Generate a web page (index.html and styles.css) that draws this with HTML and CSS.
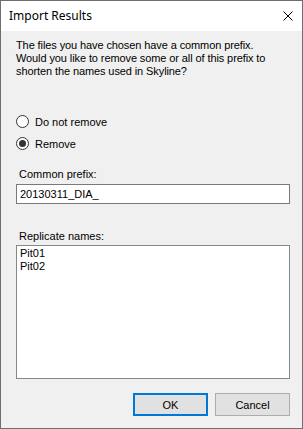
FILE: index.html
```html
<!DOCTYPE html>
<html lang="en">
<head>
<meta charset="UTF-8">
<title>Import Results</title>
<link rel="stylesheet" href="styles.css">
</head>
<body>
  <div class="window">
    <div class="titlebar">
      <div class="title">Import Results</div>
      <div class="close">
        <svg width="10" height="10" viewBox="0 0 10 10">
          <path d="M0.5 0.5 L9.5 9.5 M9.5 0.5 L0.5 9.5" stroke="#000" stroke-width="1" fill="none"/>
        </svg>
      </div>
    </div>

    <div class="content">
      <p class="message">The files you have chosen have a common prefix.<br>
        Would you like to remove some or all of this prefix to<br>
        shorten the names used in Skyline?</p>

      <div class="radios">
        <div class="radio-row">
          <span class="radio"></span>
          <span>Do not remove</span>
        </div>
        <div class="radio-row">
          <span class="radio checked"></span>
          <span>Remove</span>
        </div>
      </div>

      <div class="field-label prefix-label">Common prefix:</div>
      <div class="textbox">20130311_DIA_</div>

      <div class="field-label names-label">Replicate names:</div>
      <div class="listbox">
        <div>Pit01</div>
        <div>Pit02</div>
      </div>

      <div class="buttons">
        <button class="btn btn-default">OK</button>
        <button class="btn">Cancel</button>
      </div>
    </div>
  </div>
</body>
</html>
```

FILE: styles.css
```css
body {
  margin: 0;
  padding: 0;
  font-family: "Liberation Sans", Arial, sans-serif;
  font-size: 11px;
  color: #000;
}

.window {
  width: 303px;
  height: 429px;
  box-sizing: border-box;
  border: 1px solid #6f6f6f;
  background-color: #f0f0f0;
}

.titlebar {
  height: 30px;
  background-color: #fff;
  display: flex;
  align-items: center;
  justify-content: space-between;
  padding-left: 8px;
  padding-right: 9px;
}

.title {
  font-family: "Noto Sans", "Open Sans", sans-serif;
  font-size: 12px;
  padding-bottom: 1px;
}

.close {
  display: flex;
  width: 10px;
  height: 10px;
}

.content {
  padding: 8px 12px 0 15px;
}

.message {
  margin: 0;
  line-height: 13px;
  letter-spacing: -0.1px;
}

.radios {
  margin-top: 35px;
}

.radio-row {
  display: flex;
  align-items: center;
  height: 17px;
  margin-bottom: 5px;
}

.radio {
  width: 13px;
  height: 13px;
  box-sizing: border-box;
  border: 1px solid #333;
  border-radius: 50%;
  background-color: #fff;
  margin-right: 6px;
  display: flex;
  align-items: center;
  justify-content: center;
}

.radio.checked::after {
  content: "";
  width: 7px;
  height: 7px;
  border-radius: 50%;
  background-color: #333;
}

.field-label {
  padding-left: 3px;
  line-height: 13px;
}

.prefix-label {
  margin-top: 16px;
}

.textbox {
  margin-top: 3px;
  height: 20px;
  box-sizing: border-box;
  border: 1px solid #7a7a7a;
  background-color: #fff;
  padding: 0 3px;
  line-height: 18px;
}

.names-label {
  margin-top: 26px;
}

.listbox {
  margin-top: 2px;
  height: 134px;
  box-sizing: border-box;
  border: 1px solid #828790;
  background-color: #fff;
  padding: 1px 3px;
  line-height: 13px;
}

.buttons {
  display: flex;
  justify-content: flex-end;
  gap: 7px;
  margin-top: 14px;
}

.btn {
  width: 75px;
  height: 23px;
  box-sizing: border-box;
  border: 1px solid #adadad;
  background-color: #e1e1e1;
  font-family: "Liberation Sans", Arial, sans-serif;
  font-size: 11px;
  color: #000;
  padding: 0;
}

.btn-default {
  border: 2px solid #0078d7;
}
```
